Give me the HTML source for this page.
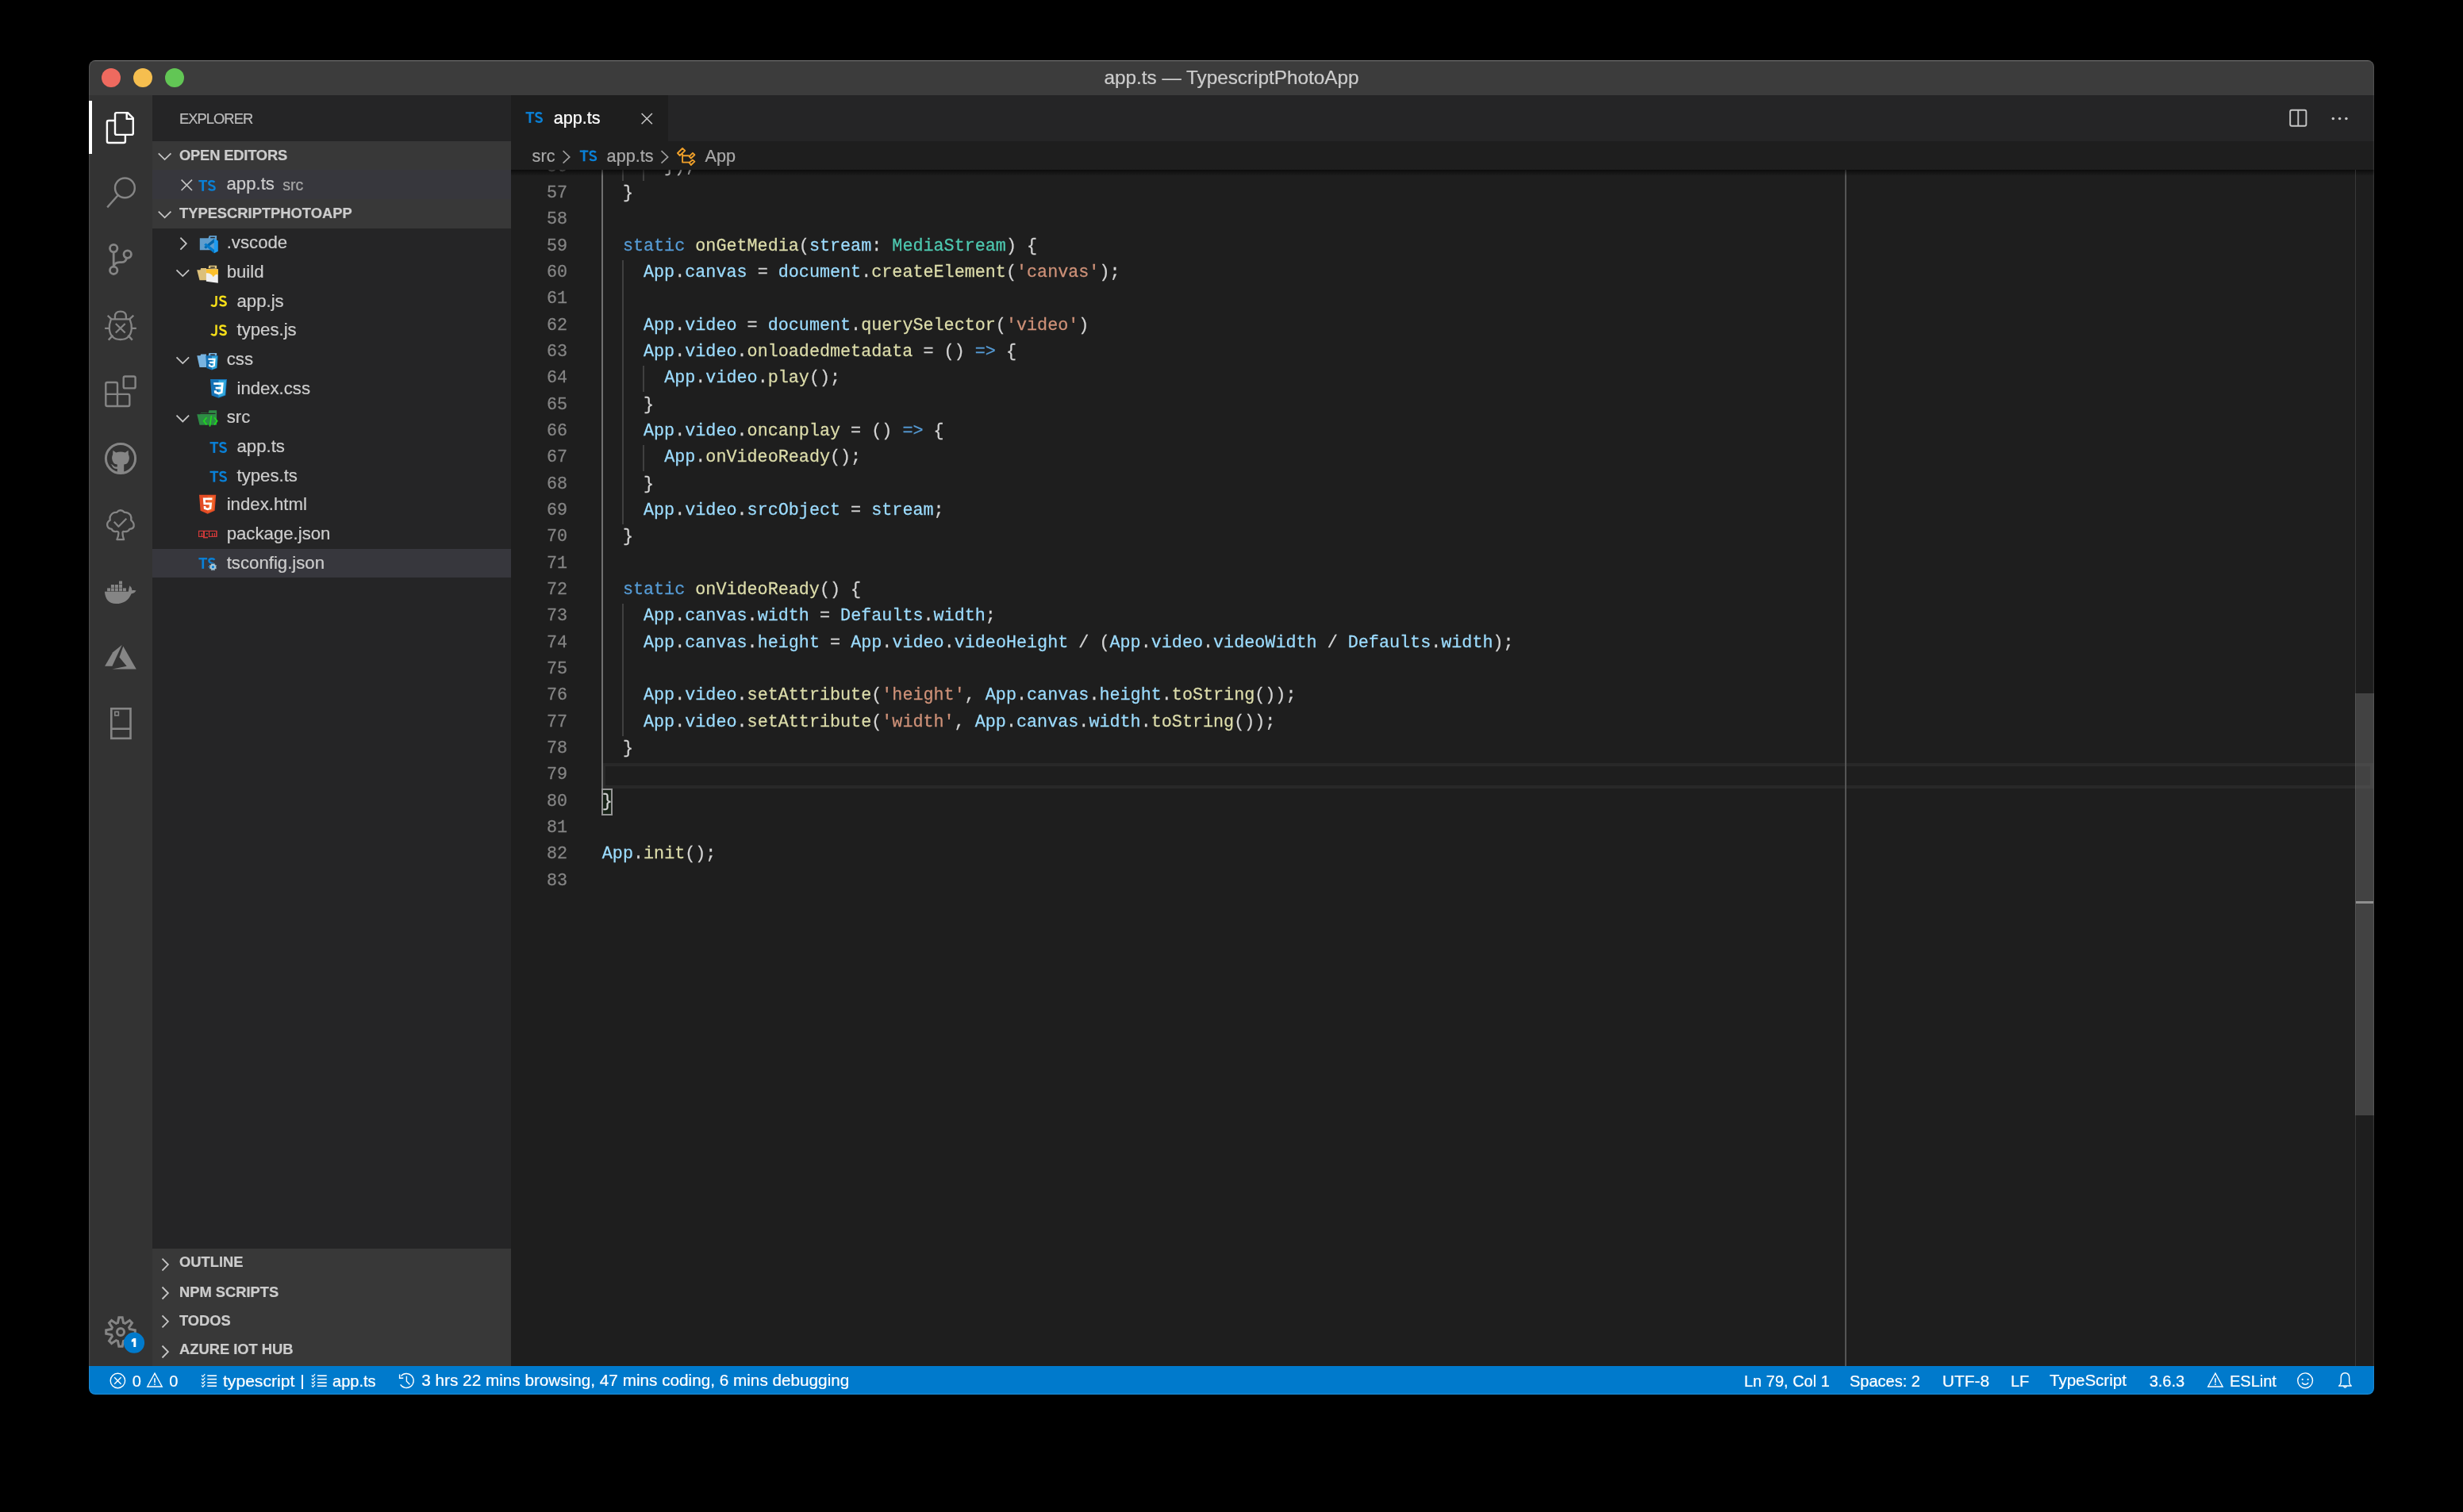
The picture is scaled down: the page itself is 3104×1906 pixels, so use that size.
<!DOCTYPE html><html><head><meta charset="utf-8"><title>app.ts</title><style>
html,body{margin:0;padding:0;background:#000;width:3104px;height:1906px;overflow:hidden;}
#win{position:absolute;left:0;top:0;width:3104px;height:1906px;clip-path:inset(76px 112px 148px 112px round 8px);will-change:transform;}
.r{position:absolute}
.t{position:absolute;white-space:pre}
.s{font-family:"Liberation Sans",sans-serif;-webkit-text-stroke:0.22px currentColor}
.m{font-family:"Liberation Mono",monospace}
.k{color:#569cd6}.f{color:#dcdcaa}.v{color:#9cdcfe}.ty{color:#4ec9b0}.st{color:#ce9178}
svg{position:absolute;left:0;top:0}
</style></head><body>
<div id="win">
<div class="r" style="left:112.00px;top:76.00px;width:2880.00px;height:44.00px;background:#3c3c3c;"></div>
<div class="r" style="left:112.00px;top:120.00px;width:80.00px;height:1602.00px;background:#333333;"></div>
<div class="r" style="left:192.00px;top:120.00px;width:452.00px;height:1602.00px;background:#252526;"></div>
<div class="r" style="left:644.00px;top:120.00px;width:2348.00px;height:1602.00px;background:#1e1e1e;"></div>
<div class="r" style="left:644.00px;top:120.00px;width:2348.00px;height:58.00px;background:#252526;"></div>
<div class="r" style="left:644.00px;top:120.00px;width:198.00px;height:58.00px;background:#1e1e1e;"></div>
<div class="r" style="left:112.00px;top:1722.00px;width:2880.00px;height:36.00px;background:#007acc;"></div>
<div class="r" style="left:112.00px;top:76.00px;width:2880.00px;height:1.00px;background:#707070;opacity:0.8"></div>
<div class="r" style="left:128.00px;top:86.00px;width:24.00px;height:24.00px;background:#ee6a5f;border-radius:50%"></div>
<div class="r" style="left:168.00px;top:86.00px;width:24.00px;height:24.00px;background:#f5be4f;border-radius:50%"></div>
<div class="r" style="left:208.00px;top:86.00px;width:24.00px;height:24.00px;background:#62c655;border-radius:50%"></div>
<div class="t s" style="left:112px;width:2880px;text-align:center;top:85.75px;font-size:24.3px;line-height:24.3px;color:#cccccc">app.ts — TypescriptPhotoApp</div>
<div class="r" style="left:112.00px;top:127.00px;width:4.00px;height:67.00px;background:#ffffff;"></div>
<div class="t s" style="left:226.00px;top:140.72px;font-size:18.33px;line-height:18.33px;color:#bbbbbb;letter-spacing:-0.95px">EXPLORER</div>
<div class="r" style="left:192.00px;top:178.00px;width:452.00px;height:36.00px;background:#383838;"></div>
<div class="r" style="left:192.00px;top:214.00px;width:452.00px;height:37.00px;background:#37373d;"></div>
<div class="r" style="left:192.00px;top:251.00px;width:452.00px;height:37.00px;background:#383838;"></div>
<div class="t s" style="left:226.00px;top:186.62px;font-size:18.33px;line-height:18.33px;color:#cccccc;font-weight:bold;letter-spacing:-0.18px">OPEN EDITORS</div>
<div class="t s" style="left:226.00px;top:259.92px;font-size:18.33px;line-height:18.33px;color:#cccccc;font-weight:bold;">TYPESCRIPTPHOTOAPP</div>
<div class="t s" style="left:285.50px;top:221.23px;font-size:22.2px;line-height:22.2px;color:#cccccc;">app.ts</div>
<div class="t s" style="left:356.20px;top:223.53px;font-size:19.5px;line-height:19.5px;color:#a8a8a8;">src</div>
<div class="r" style="left:192.00px;top:691.80px;width:452.00px;height:36.20px;background:#37373d;"></div>
<div class="t s" style="left:285.70px;top:295.33px;font-size:22.2px;line-height:22.2px;color:#cccccc;">.vscode</div>
<div class="t s" style="left:285.70px;top:332.00px;font-size:22.2px;line-height:22.2px;color:#cccccc;">build</div>
<div class="t s" style="left:298.50px;top:368.66px;font-size:22.2px;line-height:22.2px;color:#cccccc;">app.js</div>
<div class="t s" style="left:298.50px;top:405.33px;font-size:22.2px;line-height:22.2px;color:#cccccc;">types.js</div>
<div class="t s" style="left:285.70px;top:442.00px;font-size:22.2px;line-height:22.2px;color:#cccccc;">css</div>
<div class="t s" style="left:298.50px;top:478.66px;font-size:22.2px;line-height:22.2px;color:#cccccc;">index.css</div>
<div class="t s" style="left:285.70px;top:515.33px;font-size:22.2px;line-height:22.2px;color:#cccccc;">src</div>
<div class="t s" style="left:298.50px;top:552.00px;font-size:22.2px;line-height:22.2px;color:#cccccc;">app.ts</div>
<div class="t s" style="left:298.50px;top:588.67px;font-size:22.2px;line-height:22.2px;color:#cccccc;">types.ts</div>
<div class="t s" style="left:285.70px;top:625.33px;font-size:22.2px;line-height:22.2px;color:#cccccc;">index.html</div>
<div class="t s" style="left:285.70px;top:662.00px;font-size:22.2px;line-height:22.2px;color:#cccccc;">package.json</div>
<div class="t s" style="left:285.70px;top:698.67px;font-size:22.2px;line-height:22.2px;color:#cccccc;">tsconfig.json</div>
<div class="r" style="left:192.00px;top:1574.00px;width:452.00px;height:36.67px;background:#383838;"></div>
<div class="t s" style="left:226.00px;top:1582.42px;font-size:18.33px;line-height:18.33px;color:#cccccc;font-weight:bold;">OUTLINE</div>
<div class="r" style="left:192.00px;top:1610.67px;width:452.00px;height:36.67px;background:#383838;"></div>
<div class="t s" style="left:226.00px;top:1620.42px;font-size:18.33px;line-height:18.33px;color:#cccccc;font-weight:bold;">NPM SCRIPTS</div>
<div class="r" style="left:192.00px;top:1647.33px;width:452.00px;height:36.67px;background:#383838;"></div>
<div class="t s" style="left:226.00px;top:1656.32px;font-size:18.33px;line-height:18.33px;color:#cccccc;font-weight:bold;">TODOS</div>
<div class="r" style="left:192.00px;top:1684.00px;width:452.00px;height:38.00px;background:#383838;"></div>
<div class="t s" style="left:226.00px;top:1692.32px;font-size:18.33px;line-height:18.33px;color:#cccccc;font-weight:bold;">AZURE IOT HUB</div>
<div class="t s" style="left:697.70px;top:137.88px;font-size:21.67px;line-height:21.67px;color:#ffffff;">app.ts</div>
<div class="t s" style="left:670.60px;top:186.28px;font-size:21.67px;line-height:21.67px;color:#a9a9a9;">src</div>
<div class="t s" style="left:764.60px;top:186.28px;font-size:21.67px;line-height:21.67px;color:#a9a9a9;">app.ts</div>
<div class="t s" style="left:888.50px;top:186.28px;font-size:21.67px;line-height:21.67px;color:#a9a9a9;">App</div>
<div class="r" style="left:759.00px;top:961.80px;width:2231.70px;height:32.40px;background:transparent;border:4.1px solid #282828;box-sizing:border-box"></div>
<div class="r" style="left:757.90px;top:994.10px;width:14.20px;height:33.90px;background:#172217;border:2.3px solid #959595;box-sizing:border-box"></div>
<div class="r" style="left:758.00px;top:214.00px;width:2.00px;height:780.30px;background:#707070;"></div>
<div class="r" style="left:784.10px;top:214.00px;width:1.60px;height:13.63px;background:#404040;"></div>
<div class="r" style="left:810.20px;top:214.00px;width:1.60px;height:13.63px;background:#404040;"></div>
<div class="r" style="left:784.10px;top:327.63px;width:1.60px;height:333.33px;background:#404040;"></div>
<div class="r" style="left:810.20px;top:460.97px;width:1.60px;height:33.33px;background:#404040;"></div>
<div class="r" style="left:810.20px;top:560.97px;width:1.60px;height:33.33px;background:#404040;"></div>
<div class="r" style="left:784.10px;top:760.97px;width:1.60px;height:166.67px;background:#404040;"></div>
<div class="r" style="left:2324.60px;top:214.00px;width:2.00px;height:1508.00px;background:#555555;"></div>
<div class="t m" style="left:689.00px;top:199.67px;font-size:21.75px;line-height:21.75px;color:#858585;transform:scaleY(1.05);transform-origin:0 16.53px;-webkit-text-stroke:0.25px currentColor;">56</div>
<div class="t m" style="left:758.80px;top:199.67px;font-size:21.75px;line-height:21.75px;color:#d4d4d4;transform:scaleY(1.05);transform-origin:0 16.53px;-webkit-text-stroke:0.25px currentColor;">      });</div>
<div class="t m" style="left:689.00px;top:233.00px;font-size:21.75px;line-height:21.75px;color:#858585;transform:scaleY(1.05);transform-origin:0 16.53px;-webkit-text-stroke:0.25px currentColor;">57</div>
<div class="t m" style="left:758.80px;top:233.00px;font-size:21.75px;line-height:21.75px;color:#d4d4d4;transform:scaleY(1.05);transform-origin:0 16.53px;-webkit-text-stroke:0.25px currentColor;">  }</div>
<div class="t m" style="left:689.00px;top:266.34px;font-size:21.75px;line-height:21.75px;color:#858585;transform:scaleY(1.05);transform-origin:0 16.53px;-webkit-text-stroke:0.25px currentColor;">58</div>
<div class="t m" style="left:689.00px;top:299.67px;font-size:21.75px;line-height:21.75px;color:#858585;transform:scaleY(1.05);transform-origin:0 16.53px;-webkit-text-stroke:0.25px currentColor;">59</div>
<div class="t m" style="left:758.80px;top:299.67px;font-size:21.75px;line-height:21.75px;color:#d4d4d4;transform:scaleY(1.05);transform-origin:0 16.53px;-webkit-text-stroke:0.25px currentColor;">  <span class="k">static</span> <span class="f">onGetMedia</span>(<span class="v">stream</span>: <span class="ty">MediaStream</span>) {</div>
<div class="t m" style="left:689.00px;top:333.00px;font-size:21.75px;line-height:21.75px;color:#858585;transform:scaleY(1.05);transform-origin:0 16.53px;-webkit-text-stroke:0.25px currentColor;">60</div>
<div class="t m" style="left:758.80px;top:333.00px;font-size:21.75px;line-height:21.75px;color:#d4d4d4;transform:scaleY(1.05);transform-origin:0 16.53px;-webkit-text-stroke:0.25px currentColor;">    <span class="v">App</span>.<span class="v">canvas</span> = <span class="v">document</span>.<span class="f">createElement</span>(<span class="st">'canvas'</span>);</div>
<div class="t m" style="left:689.00px;top:366.34px;font-size:21.75px;line-height:21.75px;color:#858585;transform:scaleY(1.05);transform-origin:0 16.53px;-webkit-text-stroke:0.25px currentColor;">61</div>
<div class="t m" style="left:689.00px;top:399.67px;font-size:21.75px;line-height:21.75px;color:#858585;transform:scaleY(1.05);transform-origin:0 16.53px;-webkit-text-stroke:0.25px currentColor;">62</div>
<div class="t m" style="left:758.80px;top:399.67px;font-size:21.75px;line-height:21.75px;color:#d4d4d4;transform:scaleY(1.05);transform-origin:0 16.53px;-webkit-text-stroke:0.25px currentColor;">    <span class="v">App</span>.<span class="v">video</span> = <span class="v">document</span>.<span class="f">querySelector</span>(<span class="st">'video'</span>)</div>
<div class="t m" style="left:689.00px;top:433.00px;font-size:21.75px;line-height:21.75px;color:#858585;transform:scaleY(1.05);transform-origin:0 16.53px;-webkit-text-stroke:0.25px currentColor;">63</div>
<div class="t m" style="left:758.80px;top:433.00px;font-size:21.75px;line-height:21.75px;color:#d4d4d4;transform:scaleY(1.05);transform-origin:0 16.53px;-webkit-text-stroke:0.25px currentColor;">    <span class="v">App</span>.<span class="v">video</span>.<span class="f">onloadedmetadata</span> = () <span class="k">=&gt;</span> {</div>
<div class="t m" style="left:689.00px;top:466.34px;font-size:21.75px;line-height:21.75px;color:#858585;transform:scaleY(1.05);transform-origin:0 16.53px;-webkit-text-stroke:0.25px currentColor;">64</div>
<div class="t m" style="left:758.80px;top:466.34px;font-size:21.75px;line-height:21.75px;color:#d4d4d4;transform:scaleY(1.05);transform-origin:0 16.53px;-webkit-text-stroke:0.25px currentColor;">      <span class="v">App</span>.<span class="v">video</span>.<span class="f">play</span>();</div>
<div class="t m" style="left:689.00px;top:499.67px;font-size:21.75px;line-height:21.75px;color:#858585;transform:scaleY(1.05);transform-origin:0 16.53px;-webkit-text-stroke:0.25px currentColor;">65</div>
<div class="t m" style="left:758.80px;top:499.67px;font-size:21.75px;line-height:21.75px;color:#d4d4d4;transform:scaleY(1.05);transform-origin:0 16.53px;-webkit-text-stroke:0.25px currentColor;">    }</div>
<div class="t m" style="left:689.00px;top:533.00px;font-size:21.75px;line-height:21.75px;color:#858585;transform:scaleY(1.05);transform-origin:0 16.53px;-webkit-text-stroke:0.25px currentColor;">66</div>
<div class="t m" style="left:758.80px;top:533.00px;font-size:21.75px;line-height:21.75px;color:#d4d4d4;transform:scaleY(1.05);transform-origin:0 16.53px;-webkit-text-stroke:0.25px currentColor;">    <span class="v">App</span>.<span class="v">video</span>.<span class="f">oncanplay</span> = () <span class="k">=&gt;</span> {</div>
<div class="t m" style="left:689.00px;top:566.34px;font-size:21.75px;line-height:21.75px;color:#858585;transform:scaleY(1.05);transform-origin:0 16.53px;-webkit-text-stroke:0.25px currentColor;">67</div>
<div class="t m" style="left:758.80px;top:566.34px;font-size:21.75px;line-height:21.75px;color:#d4d4d4;transform:scaleY(1.05);transform-origin:0 16.53px;-webkit-text-stroke:0.25px currentColor;">      <span class="v">App</span>.<span class="f">onVideoReady</span>();</div>
<div class="t m" style="left:689.00px;top:599.67px;font-size:21.75px;line-height:21.75px;color:#858585;transform:scaleY(1.05);transform-origin:0 16.53px;-webkit-text-stroke:0.25px currentColor;">68</div>
<div class="t m" style="left:758.80px;top:599.67px;font-size:21.75px;line-height:21.75px;color:#d4d4d4;transform:scaleY(1.05);transform-origin:0 16.53px;-webkit-text-stroke:0.25px currentColor;">    }</div>
<div class="t m" style="left:689.00px;top:633.00px;font-size:21.75px;line-height:21.75px;color:#858585;transform:scaleY(1.05);transform-origin:0 16.53px;-webkit-text-stroke:0.25px currentColor;">69</div>
<div class="t m" style="left:758.80px;top:633.00px;font-size:21.75px;line-height:21.75px;color:#d4d4d4;transform:scaleY(1.05);transform-origin:0 16.53px;-webkit-text-stroke:0.25px currentColor;">    <span class="v">App</span>.<span class="v">video</span>.<span class="v">srcObject</span> = <span class="v">stream</span>;</div>
<div class="t m" style="left:689.00px;top:666.34px;font-size:21.75px;line-height:21.75px;color:#858585;transform:scaleY(1.05);transform-origin:0 16.53px;-webkit-text-stroke:0.25px currentColor;">70</div>
<div class="t m" style="left:758.80px;top:666.34px;font-size:21.75px;line-height:21.75px;color:#d4d4d4;transform:scaleY(1.05);transform-origin:0 16.53px;-webkit-text-stroke:0.25px currentColor;">  }</div>
<div class="t m" style="left:689.00px;top:699.67px;font-size:21.75px;line-height:21.75px;color:#858585;transform:scaleY(1.05);transform-origin:0 16.53px;-webkit-text-stroke:0.25px currentColor;">71</div>
<div class="t m" style="left:689.00px;top:733.00px;font-size:21.75px;line-height:21.75px;color:#858585;transform:scaleY(1.05);transform-origin:0 16.53px;-webkit-text-stroke:0.25px currentColor;">72</div>
<div class="t m" style="left:758.80px;top:733.00px;font-size:21.75px;line-height:21.75px;color:#d4d4d4;transform:scaleY(1.05);transform-origin:0 16.53px;-webkit-text-stroke:0.25px currentColor;">  <span class="k">static</span> <span class="f">onVideoReady</span>() {</div>
<div class="t m" style="left:689.00px;top:766.34px;font-size:21.75px;line-height:21.75px;color:#858585;transform:scaleY(1.05);transform-origin:0 16.53px;-webkit-text-stroke:0.25px currentColor;">73</div>
<div class="t m" style="left:758.80px;top:766.34px;font-size:21.75px;line-height:21.75px;color:#d4d4d4;transform:scaleY(1.05);transform-origin:0 16.53px;-webkit-text-stroke:0.25px currentColor;">    <span class="v">App</span>.<span class="v">canvas</span>.<span class="v">width</span> = <span class="v">Defaults</span>.<span class="v">width</span>;</div>
<div class="t m" style="left:689.00px;top:799.67px;font-size:21.75px;line-height:21.75px;color:#858585;transform:scaleY(1.05);transform-origin:0 16.53px;-webkit-text-stroke:0.25px currentColor;">74</div>
<div class="t m" style="left:758.80px;top:799.67px;font-size:21.75px;line-height:21.75px;color:#d4d4d4;transform:scaleY(1.05);transform-origin:0 16.53px;-webkit-text-stroke:0.25px currentColor;">    <span class="v">App</span>.<span class="v">canvas</span>.<span class="v">height</span> = <span class="v">App</span>.<span class="v">video</span>.<span class="v">videoHeight</span> / (<span class="v">App</span>.<span class="v">video</span>.<span class="v">videoWidth</span> / <span class="v">Defaults</span>.<span class="v">width</span>);</div>
<div class="t m" style="left:689.00px;top:833.00px;font-size:21.75px;line-height:21.75px;color:#858585;transform:scaleY(1.05);transform-origin:0 16.53px;-webkit-text-stroke:0.25px currentColor;">75</div>
<div class="t m" style="left:689.00px;top:866.34px;font-size:21.75px;line-height:21.75px;color:#858585;transform:scaleY(1.05);transform-origin:0 16.53px;-webkit-text-stroke:0.25px currentColor;">76</div>
<div class="t m" style="left:758.80px;top:866.34px;font-size:21.75px;line-height:21.75px;color:#d4d4d4;transform:scaleY(1.05);transform-origin:0 16.53px;-webkit-text-stroke:0.25px currentColor;">    <span class="v">App</span>.<span class="v">video</span>.<span class="f">setAttribute</span>(<span class="st">'height'</span>, <span class="v">App</span>.<span class="v">canvas</span>.<span class="v">height</span>.<span class="f">toString</span>());</div>
<div class="t m" style="left:689.00px;top:899.67px;font-size:21.75px;line-height:21.75px;color:#858585;transform:scaleY(1.05);transform-origin:0 16.53px;-webkit-text-stroke:0.25px currentColor;">77</div>
<div class="t m" style="left:758.80px;top:899.67px;font-size:21.75px;line-height:21.75px;color:#d4d4d4;transform:scaleY(1.05);transform-origin:0 16.53px;-webkit-text-stroke:0.25px currentColor;">    <span class="v">App</span>.<span class="v">video</span>.<span class="f">setAttribute</span>(<span class="st">'width'</span>, <span class="v">App</span>.<span class="v">canvas</span>.<span class="v">width</span>.<span class="f">toString</span>());</div>
<div class="t m" style="left:689.00px;top:933.00px;font-size:21.75px;line-height:21.75px;color:#858585;transform:scaleY(1.05);transform-origin:0 16.53px;-webkit-text-stroke:0.25px currentColor;">78</div>
<div class="t m" style="left:758.80px;top:933.00px;font-size:21.75px;line-height:21.75px;color:#d4d4d4;transform:scaleY(1.05);transform-origin:0 16.53px;-webkit-text-stroke:0.25px currentColor;">  }</div>
<div class="t m" style="left:689.00px;top:966.34px;font-size:21.75px;line-height:21.75px;color:#858585;transform:scaleY(1.05);transform-origin:0 16.53px;-webkit-text-stroke:0.25px currentColor;">79</div>
<div class="t m" style="left:689.00px;top:999.67px;font-size:21.75px;line-height:21.75px;color:#858585;transform:scaleY(1.05);transform-origin:0 16.53px;-webkit-text-stroke:0.25px currentColor;">80</div>
<div class="t m" style="left:758.80px;top:999.67px;font-size:21.75px;line-height:21.75px;color:#d4d4d4;transform:scaleY(1.05);transform-origin:0 16.53px;-webkit-text-stroke:0.25px currentColor;">}</div>
<div class="t m" style="left:689.00px;top:1033.00px;font-size:21.75px;line-height:21.75px;color:#858585;transform:scaleY(1.05);transform-origin:0 16.53px;-webkit-text-stroke:0.25px currentColor;">81</div>
<div class="t m" style="left:689.00px;top:1066.34px;font-size:21.75px;line-height:21.75px;color:#858585;transform:scaleY(1.05);transform-origin:0 16.53px;-webkit-text-stroke:0.25px currentColor;">82</div>
<div class="t m" style="left:758.80px;top:1066.34px;font-size:21.75px;line-height:21.75px;color:#d4d4d4;transform:scaleY(1.05);transform-origin:0 16.53px;-webkit-text-stroke:0.25px currentColor;"><span class="v">App</span>.<span class="f">init</span>();</div>
<div class="t m" style="left:689.00px;top:1099.67px;font-size:21.75px;line-height:21.75px;color:#858585;transform:scaleY(1.05);transform-origin:0 16.53px;-webkit-text-stroke:0.25px currentColor;">83</div>
<div class="r" style="left:644.00px;top:178.00px;width:2348.00px;height:36.00px;background:#1e1e1e;"></div>
<div class="t s" style="left:670.60px;top:186.28px;font-size:21.67px;line-height:21.67px;color:#a9a9a9;">src</div>
<div class="t s" style="left:764.60px;top:186.28px;font-size:21.67px;line-height:21.67px;color:#a9a9a9;">app.ts</div>
<div class="t s" style="left:888.50px;top:186.28px;font-size:21.67px;line-height:21.67px;color:#a9a9a9;">App</div>
<div class="r" style="left:644.00px;top:214.00px;width:2348.00px;height:8.00px;background:linear-gradient(#000000 0%, rgba(0,0,0,0) 100%);opacity:0.6"></div>
<div class="r" style="left:2967.80px;top:873.80px;width:24.20px;height:531.90px;background:rgba(121,121,121,0.4);"></div>
<div class="r" style="left:2969.00px;top:1136.20px;width:22.00px;height:3.00px;background:#8f8f8f;"></div>
<div class="r" style="left:2967.80px;top:214.00px;width:1.20px;height:1508.00px;background:rgba(127,127,127,0.3);"></div>
<div class="t s" style="left:166.70px;top:1730.60px;font-size:20.0px;line-height:20.0px;color:#ffffff;">0</div>
<div class="t s" style="left:213.20px;top:1730.60px;font-size:20.0px;line-height:20.0px;color:#ffffff;">0</div>
<div class="t s" style="left:281.00px;top:1729.66px;font-size:21.1px;line-height:21.1px;color:#ffffff;">typescript</div>
<div class="r" style="left:380.00px;top:1733.20px;width:1.80px;height:17.60px;background:#ffffff;"></div>
<div class="t s" style="left:419.10px;top:1730.60px;font-size:20.0px;line-height:20.0px;color:#ffffff;">app.ts</div>
<div class="t s" style="left:531.30px;top:1729.99px;font-size:20.72px;line-height:20.72px;color:#ffffff;">3 hrs 22 mins browsing, 47 mins coding, 6 mins debugging</div>
<div class="t s" style="left:2198.00px;top:1730.60px;font-size:20.0px;line-height:20.0px;color:#ffffff;">Ln 79, Col 1</div>
<div class="t s" style="left:2331.00px;top:1730.60px;font-size:20.0px;line-height:20.0px;color:#ffffff;">Spaces: 2</div>
<div class="t s" style="left:2447.80px;top:1729.75px;font-size:21.0px;line-height:21.0px;color:#ffffff;">UTF-8</div>
<div class="t s" style="left:2534.00px;top:1730.60px;font-size:20.0px;line-height:20.0px;color:#ffffff;">LF</div>
<div class="t s" style="left:2583.00px;top:1730.17px;font-size:20.5px;line-height:20.5px;color:#ffffff;">TypeScript</div>
<div class="t s" style="left:2708.70px;top:1730.60px;font-size:20.0px;line-height:20.0px;color:#ffffff;">3.6.3</div>
<div class="t s" style="left:2810.00px;top:1730.60px;font-size:20.0px;line-height:20.0px;color:#ffffff;">ESLint</div>
<svg width="3104" height="1906" viewBox="0 0 3104 1906"><g fill="none" stroke="#ffffff" stroke-width="2.4" stroke-linejoin="round"><path d="M145,152 H137 Q134.9,152 134.9,154 V178 Q134.9,180 137,180 H155.8 Q157.9,180 157.9,178 V170"/><path d="M147,142.1 H161 L167.8,148.9 V168 Q167.8,169.9 165.8,169.9 H147 Q145,169.9 145,168 V144 Q145,142.1 147,142.1 Z"/><path d="M159.7,142.1 V149.9 H167.8"/></g><g fill="none" stroke="#858585" stroke-width="2.4"><circle cx="157.4" cy="236.9" r="12.4"/><path d="M148.6,246.2 L135.2,261.4"/></g><g fill="none" stroke="#858585" stroke-width="2.8"><circle cx="143.2" cy="313.1" r="4.7"/><circle cx="143.2" cy="340.8" r="4.7"/><circle cx="160.7" cy="320.6" r="4.7"/><path d="M143.2,317.8 V336.1"/><path d="M143.5,334.5 Q145.5,330.6 151,330.6 H153.5 Q158.5,330.6 159.6,325.2"/></g><g fill="none" stroke="#858585" stroke-width="2.3" stroke-linecap="butt"><path d="M144.9,402 V399 Q144.9,392.6 151.9,392.6 Q158.9,392.6 158.9,399 V402"/><path d="M139.9,402.4 H163.6 Q166.2,409 165.8,414.5 Q164.5,428 151.8,428 Q139,428 137.8,414.5 Q137.4,409 139.9,402.4 Z"/><path d="M145.8,408 L157.7,419.5 M157.7,408 L145.8,419.5"/><path d="M135.7,397.7 L140.5,402.4 M168.3,397.7 L163.2,402.4 M132.1,413.9 H138 M165.6,413.9 H171.8 M136.7,428.6 L142.3,422.6 M166.8,428.6 L161.3,422.6"/></g><g fill="none" stroke="#858585" stroke-width="2.4" stroke-linejoin="round"><path d="M135.3,482 H146 Q148,482 148,484 V496.9 H161.3 Q163.3,496.9 163.3,498.9 V510 Q163.3,512 161.3,512 H135.3 Q133.3,512 133.3,510 V484 Q133.3,482 135.3,482 Z"/><path d="M133.3,496.9 H148 V512"/><path d="M157.7,474.5 H168.6 Q170.6,474.5 170.6,476.5 V487.4 Q170.6,489.4 168.6,489.4 H157.7 Q155.7,489.4 155.7,487.4 V476.5 Q155.7,474.5 157.7,474.5 Z"/></g><g fill="#858585"><circle cx="152" cy="578" r="18.6" fill="none" stroke="#858585" stroke-width="3"/><path d="M142.4,567.8 L146.2,570.4 Q152,568.6 157.8,570.4 L161.6,567.8 L161.9,573 Q163.2,575.5 162.8,578.5 Q162,585 156.2,585.6 L156.2,596.6 Q152,597.4 147.8,596.6 L147.8,591 Q143,591.6 141.4,587.6 Q140.6,585.8 139.4,585.3 Q141.6,585 143,587 Q144.6,589 147.8,588.4 L147.8,585.6 Q142,585 141.2,578.5 Q140.8,575.5 142.1,573 Z"/></g><g fill="none" stroke="#858585" stroke-width="2.3" stroke-linejoin="round"><path d="M147,645.9 Q151.8,640.6 156.9,645.9 Q161.7,645.6 164.3,649.2 Q165.8,651.6 165.3,655.8 Q169.4,659 168.6,663.6 Q167.6,667 163.3,666.9 Q161.5,670.5 156.5,670.1 Q154.2,669.4 154.5,672 Q154.5,676 156.1,680.2 H147.4 Q149.3,676 149.4,672 Q149.6,669.4 145.8,670.1 Q141.8,670.3 140.7,666.9 Q135.5,666.4 135.1,661.6 Q135,657.8 138.7,655.8 Q137.6,650.4 141.9,647.1 Q144,645.7 147,645.9 Z"/><path d="M143.8,657.8 L149.4,663.7 L159.3,653.8"/></g><g fill="#858585"><path d="M131.9,745.8 H161.7 Q162.6,740.5 163.5,738.2 Q166.6,740.8 166.4,744.2 Q169.5,743.4 171.6,744.6 Q169.6,748.2 165.5,748.4 Q160.5,761 146,761 Q133,761 131.9,745.8 Z"/><rect x="135.1" y="741.4" width="4" height="3.9"/><rect x="139.9" y="741.4" width="4" height="3.9"/><rect x="144.9" y="741.4" width="4" height="3.9"/><rect x="150.0" y="741.4" width="4" height="3.9"/><rect x="154.9" y="741.4" width="4" height="3.9"/><rect x="139.9" y="737.0" width="4" height="3.9"/><rect x="144.9" y="737.0" width="4" height="3.9"/><rect x="150.0" y="737.0" width="4" height="3.9"/><rect x="150.0" y="732.5" width="4" height="3.9"/></g><g fill="#858585"><path d="M153.7,812.9 L142.2,822.2 L132.1,839.7 H141.4 Z"/><path d="M155.3,814.7 L171.8,843.6 H141.4 L159.7,839.7 L150.4,828.6 Z"/></g><g fill="none" stroke="#858585" stroke-width="2.6"><rect x="140.3" y="893.3" width="24.2" height="37.5"/><path d="M140.3,918.7 H164.5"/><rect x="144.8" y="897.3" width="4.6" height="4.6" stroke-width="1.6"/></g><g fill="none" stroke="#858585" stroke-width="3" stroke-linejoin="miter" stroke-miterlimit="3"><path d="M148.49,1667.52 L149.82,1660.73 L154.18,1660.73 L155.51,1667.52 L157.63,1668.40 L163.38,1664.54 L166.46,1667.62 L162.60,1673.37 L163.48,1675.49 L170.27,1676.82 L170.27,1681.18 L163.48,1682.51 L162.60,1684.63 L166.46,1690.38 L163.38,1693.46 L157.63,1689.60 L155.51,1690.48 L154.18,1697.27 L149.82,1697.27 L148.49,1690.48 L146.37,1689.60 L140.62,1693.46 L137.54,1690.38 L141.40,1684.63 L140.52,1682.51 L133.73,1681.18 L133.73,1676.82 L140.52,1675.49 L141.40,1673.37 L137.54,1667.62 L140.62,1664.54 L146.37,1668.40 Z"/><circle cx="152" cy="1679" r="4.5"/></g><circle cx="169" cy="1692.7" r="13.1" fill="#007acc"/><path d="M168.3,1687.1 H171.3 V1698.1 H168.3 V1690.9 L165.8,1691.9 V1689.0 Z" fill="#ffffff"/><path d="M199.8,193.4 L207.60000000000002,201.1 L215.4,193.4" fill="none" stroke="#c5c5c5" stroke-width="1.8"/><path d="M199.8,266.6 L207.60000000000002,274.3 L215.4,266.6" fill="none" stroke="#c5c5c5" stroke-width="1.8"/><path d="M204.5,1586.6 L211.9,1594.1 L204.5,1601.6" fill="none" stroke="#c5c5c5" stroke-width="1.8"/><path d="M204.5,1622.5 L211.9,1630.0 L204.5,1637.5" fill="none" stroke="#c5c5c5" stroke-width="1.8"/><path d="M204.5,1658.3 L211.9,1665.8 L204.5,1673.3" fill="none" stroke="#c5c5c5" stroke-width="1.8"/><path d="M204.5,1696.5 L211.9,1704.0 L204.5,1711.5" fill="none" stroke="#c5c5c5" stroke-width="1.8"/><path d="M227.4,299.59999999999997 L234.8,307.09999999999997 L227.4,314.59999999999997" fill="none" stroke="#c5c5c5" stroke-width="1.8"/><path d="M222.5,340.36699999999996 L230.3,348.06699999999995 L238.1,340.36699999999996" fill="none" stroke="#c5c5c5" stroke-width="1.8"/><path d="M222.5,450.368 L230.3,458.068 L238.1,450.368" fill="none" stroke="#c5c5c5" stroke-width="1.8"/><path d="M222.5,523.702 L230.3,531.402 L238.1,523.702" fill="none" stroke="#c5c5c5" stroke-width="1.8"/><path d="M251.8,300.2 H262.5 L263.8,296.9 H273.1 V315.2 H251.8 Z" fill="#5f9dcc"/><rect x="265.2" y="298.8" width="5.6" height="1.4" fill="#252526"/><path d="M269.8,301.0 L274.8,303.4 V316.8 L269.8,319.2 Z" fill="#1f9cf0"/><path d="M269.8,301.0 L257.2,311.59999999999997 L259.4,313.59999999999997 L269.8,305.7 Z" fill="#0065a9"/><path d="M269.8,319.2 L257.2,308.59999999999997 L259.4,306.59999999999997 L269.8,314.59999999999997 Z" fill="#007acc"/><path d="M248.2,340.36699999999996 H252.5 L253.2,338.06699999999995 H260 V353.167 H251.5 Z" fill="#dcc07a"/><path d="M262.5,338.36699999999996 L263.4,334.86699999999996 H273.1 V338.86699999999996 Z" fill="#e2c77e"/><rect x="265.2" y="336.26699999999994" width="5.6" height="1.4" fill="#252526"/><path d="M259.9,339.167 H274.8 V356.86699999999996 L259.9,354.86699999999996 Z" fill="#f0f0f0"/><path d="M259.9,339.167 H274.8 V346.86699999999996 Q272,343.667 268.8,349.36699999999996 Q266,343.86699999999996 259.9,344.36699999999996 Z" fill="#fbc02d"/><path d="M248.3,448.368 H252.5 L253.2,446.468 H260 V462.968 H251.5 Z" fill="#79b4e0"/><path d="M262.5,448.868 L263.4,445.068 H273.1 V448.868 Z" fill="#79b4e0"/><rect x="265.2" y="446.468" width="5.6" height="1.4" fill="#252526"/><path d="M259.2,448.368 H274.8 L273.55199999999996,464.02 L267.0,466.568 L260.448,464.02 Z" fill="#1572b6"/><path d="M267.0,449.278 H274.02 L272.928,463.656 L267.0,465.658 Z" fill="#33a9dc"/><path d="M262.32,451.644 H271.68 L270.74399999999997,461.836 L267.0,463.292 L262.94399999999996,461.836 L262.788,459.288 H265.128 L265.284,460.38 L267.0,461.108 L268.872,460.38 L269.02799999999996,458.014 H264.192 L264.036,455.83 H269.18399999999997 L269.34,453.828 H262.476 Z" fill="#ffffff"/><path d="M265.0,477.93499999999995 H286.0 L284.32,498.40299999999996 L275.5,501.73499999999996 L266.68,498.40299999999996 Z" fill="#1572b6"/><path d="M275.5,479.12499999999994 H284.95 L283.48,497.92699999999996 L275.5,500.54499999999996 Z" fill="#33a9dc"/><path d="M269.2,482.21899999999994 H281.8 L280.54,495.54699999999997 L275.5,497.45099999999996 L270.04,495.54699999999997 L269.83,492.2149999999999 H272.98 L273.19,493.643 L275.5,494.59499999999997 L278.02,493.643 L278.23,490.5489999999999 H271.72 L271.51,487.6929999999999 H278.44 L278.65,485.07499999999993 H269.41 Z" fill="#ffffff"/><path d="M248.3,522.202 H252.5 L253.3,520.202 H260 L262.5,520.702 L263.4,517.202 H273.1 V535.702 H251.5 Z" fill="#2e8b45"/><rect x="253" y="520.802" width="18.5" height="1.2" fill="#252526"/><path d="M260.5,526.202 L256.8,530.802 L260.5,535.402 M270,526.202 L273.7,530.802 L270,535.402 M266.4,524.002 L264.4,537.702" fill="none" stroke="#1fd91f" stroke-width="1.7"/><path d="M251,623.703 H272.2 L270.6,643.703 L261.6,647.803 L252.6,643.703 Z" fill="#e34c26"/><path d="M261.6,625.5029999999999 H270.4 L269.0,642.803 L261.6,645.803 Z" fill="#ef652a"/><path d="M255.8,627.403 H267.6 L267.4,630.203 H258.8 L259.1,633.403 H267.1 L266.3,641.703 L261.6,643.203 L256.9,641.703 L256.6,638.103 H259.4 L259.5,639.803 L261.6,640.403 L263.7,639.803 L264,636.203 H256.5 Z" fill="#ffffff"/><g fill="#d23a3a"><rect x="250" y="668.8" width="23.7" height="8.2"/><rect x="256" y="676.5" width="6" height="1.9"/></g><g fill="#1e2323"><rect x="251.2" y="670.0" width="4.7" height="5.9"/><rect x="258.0" y="670.0" width="4.9" height="6.7"/><rect x="264.2" y="670.0" width="7.9" height="5.9"/></g><g fill="#d23a3a"><rect x="253.7" y="671.9" width="1.2" height="4.1"/><rect x="260.0" y="672.1" width="1.7" height="1.8"/><rect x="266.9" y="671.9" width="1.3" height="4.1"/><rect x="269.8" y="671.9" width="1.2" height="4.1"/></g><path d="M228.6,226.6 L242,240 M242,226.6 L228.6,240" fill="none" stroke="#c5c5c5" stroke-width="1.6"/><path d="M808.6,143 L821.9,156.2 M821.9,143 L808.6,156.2" fill="none" stroke="#c5c5c5" stroke-width="1.6"/><path d="M709.6,190.2 L717.8,197.9 L709.6,205.6" fill="none" stroke="#a0a0a0" stroke-width="1.6"/><path d="M833.5,190.2 L841.7,197.9 L833.5,205.6" fill="none" stroke="#a0a0a0" stroke-width="1.6"/><g fill="none" stroke="#f0a02a" stroke-width="1.85" stroke-linejoin="round"><path d="M853.95,193.0 L860.1,187.0 L863.3,189.9 L856.8,196.0 Z"/><path d="M868.6,197.1 L873.0,192.8 L875.4,195.2 L870.8,199.5 Z"/><path d="M868.6,205.0 L873.0,201.6 L875.4,203.6 L870.8,208.0 Z"/><path d="M860.1,193.9 V204.6 H868.6 M860.1,196.2 H868.6"/></g><g fill="none" stroke="#c5c5c5" stroke-width="1.9"><rect x="2886.2" y="138.8" width="20.2" height="20" rx="2"/><path d="M2896.3,138.8 V158.8"/></g><circle cx="2940.3" cy="149.5" r="1.75" fill="#c5c5c5"/><circle cx="2948.6" cy="149.5" r="1.75" fill="#c5c5c5"/><circle cx="2956.9" cy="149.5" r="1.75" fill="#c5c5c5"/><g fill="none" stroke="#ffffff" stroke-width="1.4"><circle cx="148.4" cy="1740.5" r="9.2"/><path d="M144.2,1736.3 L152.6,1744.7 M152.6,1736.3 L144.2,1744.7"/><path d="M195,1731.2 L204.2,1748 H185.8 Z" stroke-linejoin="miter"/><path d="M2791.9,1731.2 L2801.1,1748 H2782.7 Z" stroke-linejoin="miter"/></g><g fill="#ffffff"><rect x="194.2" y="1737.3" width="1.6" height="5.8"/><rect x="194.2" y="1744.3" width="1.6" height="1.6"/><rect x="2791.1" y="1737.3" width="1.6" height="5.8"/><rect x="2791.1" y="1744.3" width="1.6" height="1.6"/></g><path d="M254.1,1733.6000000000001 L255.7,1735.4 L258.3,1732.2" fill="none" stroke="#ffffff" stroke-width="1.2"/><rect x="261.3" y="1733.4" width="11.7" height="1.6" fill="#ffffff"/><path d="M254.1,1738.0 L255.7,1739.8 L258.3,1736.6" fill="none" stroke="#ffffff" stroke-width="1.2"/><rect x="261.3" y="1737.8" width="11.7" height="1.6" fill="#ffffff"/><path d="M254.1,1742.4 L255.7,1744.2 L258.3,1741.0" fill="none" stroke="#ffffff" stroke-width="1.2"/><rect x="261.3" y="1742.2" width="11.7" height="1.6" fill="#ffffff"/><path d="M254.1,1746.6000000000001 L255.7,1748.4 L258.3,1745.2" fill="none" stroke="#ffffff" stroke-width="1.2"/><rect x="261.3" y="1746.4" width="11.7" height="1.6" fill="#ffffff"/><path d="M392.8,1733.6000000000001 L394.40000000000003,1735.4 L397.0,1732.2" fill="none" stroke="#ffffff" stroke-width="1.2"/><rect x="400.0" y="1733.4" width="11.7" height="1.6" fill="#ffffff"/><path d="M392.8,1738.0 L394.40000000000003,1739.8 L397.0,1736.6" fill="none" stroke="#ffffff" stroke-width="1.2"/><rect x="400.0" y="1737.8" width="11.7" height="1.6" fill="#ffffff"/><path d="M392.8,1742.4 L394.40000000000003,1744.2 L397.0,1741.0" fill="none" stroke="#ffffff" stroke-width="1.2"/><rect x="400.0" y="1742.2" width="11.7" height="1.6" fill="#ffffff"/><path d="M392.8,1746.6000000000001 L394.40000000000003,1748.4 L397.0,1745.2" fill="none" stroke="#ffffff" stroke-width="1.2"/><rect x="400.0" y="1746.4" width="11.7" height="1.6" fill="#ffffff"/><g fill="none" stroke="#ffffff" stroke-width="1.4"><path d="M505.4,1734.6 A9,9 0 1 1 504.6,1745.4"/><path d="M503.6,1732.4 V1737.3 H508.3"/><path d="M512.4,1734.8 V1741.2 L516.4,1745.2"/></g><g fill="none" stroke="#ffffff" stroke-width="1.4"><circle cx="2905.1" cy="1740.3" r="9.4"/><path d="M2901,1743 Q2905.1,1747.6 2909.2,1743"/></g><circle cx="2901.7" cy="1738.9" r="1.1" fill="#ffffff"/><circle cx="2908.6" cy="1738.9" r="1.1" fill="#ffffff"/><g fill="none" stroke="#ffffff" stroke-width="1.4" stroke-linejoin="round"><path d="M2955.4,1730.8 Q2950.2,1730.8 2950.2,1737 V1742.2 Q2950.2,1745 2947.6,1747 H2963.3 Q2960.7,1745 2960.7,1742.2 V1737 Q2960.7,1730.8 2955.4,1730.8 Z"/><path d="M2953.4,1747.2 Q2955.4,1751 2957.4,1747.2"/></g></svg>
<svg width="3104" height="1906" viewBox="0 0 3104 1906"><g transform="translate(662.3,141.0)" fill="#0a80d6"><rect x="0.2" y="0.1" width="10.7" height="2.3"/><rect x="4.2" y="0.1" width="2.75" height="13.8"/><path d="M20.3,2.8 C19.5,1.7 18.2,1.3 16.8,1.3 C14.7,1.3 13.2,2.4 13.2,4.0 C13.2,5.8 14.9,6.4 16.8,7.0 C18.9,7.6 20.5,8.4 20.5,10.3 C20.5,12.0 18.9,12.7 16.8,12.7 C15.1,12.7 13.7,12.1 12.8,10.9" fill="none" stroke="#0a80d6" stroke-width="2.4"/></g><g transform="translate(250.1,226.9)" fill="#0a80d6"><rect x="0.2" y="0.1" width="10.7" height="2.3"/><rect x="4.2" y="0.1" width="2.75" height="13.8"/><path d="M20.3,2.8 C19.5,1.7 18.2,1.3 16.8,1.3 C14.7,1.3 13.2,2.4 13.2,4.0 C13.2,5.8 14.9,6.4 16.8,7.0 C18.9,7.6 20.5,8.4 20.5,10.3 C20.5,12.0 18.9,12.7 16.8,12.7 C15.1,12.7 13.7,12.1 12.8,10.9" fill="none" stroke="#0a80d6" stroke-width="2.4"/></g><g transform="translate(730.5,189.4)" fill="#0a80d6"><rect x="0.2" y="0.1" width="10.7" height="2.3"/><rect x="4.2" y="0.1" width="2.75" height="13.8"/><path d="M20.3,2.8 C19.5,1.7 18.2,1.3 16.8,1.3 C14.7,1.3 13.2,2.4 13.2,4.0 C13.2,5.8 14.9,6.4 16.8,7.0 C18.9,7.6 20.5,8.4 20.5,10.3 C20.5,12.0 18.9,12.7 16.8,12.7 C15.1,12.7 13.7,12.1 12.8,10.9" fill="none" stroke="#0a80d6" stroke-width="2.4"/></g><g transform="translate(264.3,557.0)" fill="#0a80d6"><rect x="0.2" y="0.1" width="10.7" height="2.3"/><rect x="4.2" y="0.1" width="2.75" height="13.8"/><path d="M20.3,2.8 C19.5,1.7 18.2,1.3 16.8,1.3 C14.7,1.3 13.2,2.4 13.2,4.0 C13.2,5.8 14.9,6.4 16.8,7.0 C18.9,7.6 20.5,8.4 20.5,10.3 C20.5,12.0 18.9,12.7 16.8,12.7 C15.1,12.7 13.7,12.1 12.8,10.9" fill="none" stroke="#0a80d6" stroke-width="2.4"/></g><g transform="translate(264.3,593.7)" fill="#0a80d6"><rect x="0.2" y="0.1" width="10.7" height="2.3"/><rect x="4.2" y="0.1" width="2.75" height="13.8"/><path d="M20.3,2.8 C19.5,1.7 18.2,1.3 16.8,1.3 C14.7,1.3 13.2,2.4 13.2,4.0 C13.2,5.8 14.9,6.4 16.8,7.0 C18.9,7.6 20.5,8.4 20.5,10.3 C20.5,12.0 18.9,12.7 16.8,12.7 C15.1,12.7 13.7,12.1 12.8,10.9" fill="none" stroke="#0a80d6" stroke-width="2.4"/></g><g transform="translate(250.2,703.0)" fill="#0a80d6"><rect x="0.2" y="0.1" width="10.7" height="2.3"/><rect x="4.2" y="0.1" width="2.75" height="13.8"/><path d="M20.3,2.8 C19.5,1.7 18.2,1.3 16.8,1.3 C14.7,1.3 13.2,2.4 13.2,4.0 C13.2,5.8 14.9,6.4 16.8,7.0 C18.9,7.6 20.5,8.4 20.5,10.3 C20.5,12.0 18.9,12.7 16.8,12.7 C15.1,12.7 13.7,12.1 12.8,10.9" fill="none" stroke="#0a80d6" stroke-width="2.4"/></g><g transform="translate(265.2,372.5)" fill="none" stroke="#f5de19" stroke-width="2.5"><path d="M7.35,0.4 V9.8 C7.35,12.3 6.2,13.3 4.3,13.3 C2.9,13.3 1.9,12.7 1.0,11.6"/><path d="M20.3,2.8 C19.5,1.7 18.2,1.3 16.8,1.3 C14.7,1.3 13.2,2.4 13.2,4.0 C13.2,5.8 14.9,6.4 16.8,7.0 C18.9,7.6 20.5,8.4 20.5,10.3 C20.5,12.0 18.9,12.7 16.8,12.7 C15.1,12.7 13.7,12.1 12.8,10.9" transform="translate(-1.0,0)"/></g><g transform="translate(265.2,409.2)" fill="none" stroke="#f5de19" stroke-width="2.5"><path d="M7.35,0.4 V9.8 C7.35,12.3 6.2,13.3 4.3,13.3 C2.9,13.3 1.9,12.7 1.0,11.6"/><path d="M20.3,2.8 C19.5,1.7 18.2,1.3 16.8,1.3 C14.7,1.3 13.2,2.4 13.2,4.0 C13.2,5.8 14.9,6.4 16.8,7.0 C18.9,7.6 20.5,8.4 20.5,10.3 C20.5,12.0 18.9,12.7 16.8,12.7 C15.1,12.7 13.7,12.1 12.8,10.9" transform="translate(-1.0,0)"/></g><path d="M272.10,714.86 L273.18,715.76 L272.53,717.33 L271.13,717.20 L270.90,717.43 L271.03,718.83 L269.46,719.48 L268.56,718.40 L268.24,718.40 L267.34,719.48 L265.77,718.83 L265.90,717.43 L265.67,717.20 L264.27,717.33 L263.62,715.76 L264.70,714.86 L264.70,714.54 L263.62,713.64 L264.27,712.07 L265.67,712.20 L265.90,711.97 L265.77,710.57 L267.34,709.92 L268.24,711.00 L268.56,711.00 L269.46,709.92 L271.03,710.57 L270.90,711.97 L271.13,712.20 L272.53,712.07 L273.18,713.64 L272.10,714.54 Z" fill="#a9c9d9" stroke="#37373d" stroke-width="0.6"/><circle cx="268.4" cy="714.7" r="1.7" fill="#0a80d6"/></svg>
<div class="r" style="left:112px;top:76px;width:2880px;height:1682px;border-radius:8px;box-shadow:inset 0 0 0 1.2px rgba(255,255,255,0.11)"></div>
</div></body></html>
